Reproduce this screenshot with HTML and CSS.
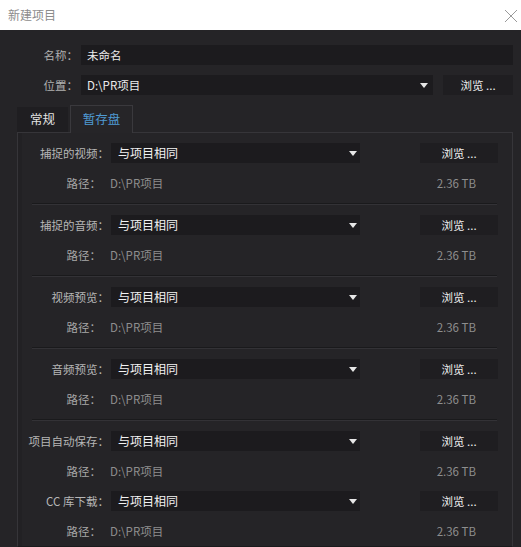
FILE: index.html
```html
<!DOCTYPE html>
<html lang="zh">
<head>
<meta charset="utf-8">
<title>新建项目</title>
<link rel="stylesheet" href="styles.css">
</head>
<body>
<div class="window">
  <div class="titlebar">
    <span class="title">新建项目</span>
    <svg class="close" width="14" height="14" viewBox="0 0 14 14"><path d="M1 1L13 13M13 1L1 13" stroke="#9a9a9a" stroke-width="1" fill="none"/></svg>
  </div>
  <div class="form">
    <div class="frow">
      <span class="flabel">名称：</span>
      <div class="field name">未命名</div>
    </div>
    <div class="frow">
      <span class="flabel">位置：</span>
      <div class="field select loc"><span>D:\PR项目</span><i class="arrow"></i></div>
      <div class="btn top">浏览 ...</div>
    </div>
  </div>
  <div class="tabs">
    <div class="tab">常规</div>
    <div class="tab active">暂存盘</div>
  </div>
  <div class="panel">
    <div class="section">
      <div class="r1"><span class="slabel">捕捉的视频：</span><div class="field select dd"><span>与项目相同</span><i class="arrow"></i></div><div class="btn sbtn">浏览 ...</div></div>
      <div class="r2"><span class="plabel">路径：</span><span class="path">D:\PR项目</span><span class="size">2.36 TB</span></div>
    </div>
    <div class="sep"></div>
    <div class="section">
      <div class="r1"><span class="slabel">捕捉的音频：</span><div class="field select dd"><span>与项目相同</span><i class="arrow"></i></div><div class="btn sbtn">浏览 ...</div></div>
      <div class="r2"><span class="plabel">路径：</span><span class="path">D:\PR项目</span><span class="size">2.36 TB</span></div>
    </div>
    <div class="sep"></div>
    <div class="section">
      <div class="r1"><span class="slabel">视频预览：</span><div class="field select dd"><span>与项目相同</span><i class="arrow"></i></div><div class="btn sbtn">浏览 ...</div></div>
      <div class="r2"><span class="plabel">路径：</span><span class="path">D:\PR项目</span><span class="size">2.36 TB</span></div>
    </div>
    <div class="sep"></div>
    <div class="section">
      <div class="r1"><span class="slabel">音频预览：</span><div class="field select dd"><span>与项目相同</span><i class="arrow"></i></div><div class="btn sbtn">浏览 ...</div></div>
      <div class="r2"><span class="plabel">路径：</span><span class="path">D:\PR项目</span><span class="size">2.36 TB</span></div>
    </div>
    <div class="sep"></div>
    <div class="section">
      <div class="r1"><span class="slabel">项目自动保存：</span><div class="field select dd"><span>与项目相同</span><i class="arrow"></i></div><div class="btn sbtn">浏览 ...</div></div>
      <div class="r2"><span class="plabel">路径：</span><span class="path">D:\PR项目</span><span class="size">2.36 TB</span></div>
      <div class="r1"><span class="slabel">CC 库下载：</span><div class="field select dd"><span>与项目相同</span><i class="arrow"></i></div><div class="btn sbtn">浏览 ...</div></div>
      <div class="r2"><span class="plabel">路径：</span><span class="path">D:\PR项目</span><span class="size">2.36 TB</span></div>
    </div>
  </div>
</div>
</body>
</html>
```
FILE: styles.css
```css
* { box-sizing: border-box; }
html, body { margin: 0; padding: 0; }
body {
  background: #252427;
  font-family: "Noto Sans CJK SC", "Microsoft YaHei", sans-serif;
  font-size: 11.5px;
  color: #b4b4b4;
  width: 521px;
  height: 547px;
  overflow: hidden;
}
.titlebar {
  height: 30px;
  background: #ffffff;
  display: flex;
  align-items: center;
  justify-content: space-between;
  padding: 0 3px 0 8px;
}
.title { color: #8c8c8c; font-size: 12px; line-height: 14px; }
.close { display: block; margin-top: 1px; }

.form {
  padding: 15px 8px 0 0;
  display: flex;
  flex-direction: column;
  gap: 10px;
}
.frow { display: flex; align-items: center; height: 20px; }
.flabel { width: 78px; text-align: right; color: #b0b0b0; line-height: 20px; }
.field {
  background: #1c1b1e;
  height: 20px;
  line-height: 20px;
  color: #ececec;
  padding-left: 6px;
}
.name { flex: 1; margin-left: 3px; }
.select { display: flex; align-items: center; justify-content: space-between; }
.loc { width: 352px; margin-left: 3px; padding-right: 5px; }
.arrow {
  display: block;
  width: 0; height: 0;
  border-left: 4px solid transparent;
  border-right: 4px solid transparent;
  border-top: 5px solid #e6e6e6;
}
.btn {
  background: #1f1e21;
  height: 20px;
  line-height: 20px;
  text-align: center;
  color: #f0f0f0;
}
.btn.top { width: 70px; margin-left: 10px; }

.tabs {
  display: flex;
  align-items: flex-end;
  margin: 10px 0 0 17px;
  height: 27px;
  position: relative;
  z-index: 1;
}
.tab {
  height: 25px;
  line-height: 24px;
  color: #e2e2e2;
  background: #1f1e21;
  width: 51px;
  text-align: center;
  font-size: 12.5px;
}
.tab.active {
  height: 28px;
  margin-left: 2px;
  width: 63px;
  background: #262528;
  color: #4f9ad3;
  border: 1px solid #3a393d;
  border-bottom: none;
  line-height: 26px;
  margin-bottom: -1px;
}
.panel {
  margin-left: 17px;
  width: 496px;
  height: 415px;
  border: 1px solid #363539;
  border-bottom-color: #1a1a1c;
  padding: 10px 0 0 0;
  box-shadow: inset 4px 0 0 #222124;
}
.r1, .r2 { display: flex; align-items: center; height: 20px; line-height: 20px; }
.section { display: flex; flex-direction: column; gap: 10px; }
.slabel { width: 91px; text-align: right; color: #b6b6b6; white-space: nowrap; }
.dd { width: 249px; margin-left: 2px; padding-left: 7px; padding-right: 3px; color: #f2f2f2; font-size: 12px; }
.sbtn { width: 78px; margin-left: 60px; }
.plabel { width: 83px; text-align: right; color: #a8a8a8; }
.path { margin-left: 9px; flex: 1; color: #8e8e8e; }
.size { color: #8e8e8e; margin-right: 36px; }
.sep {
  margin: 10px 15px 10px 14px;
  height: 2px;
  border-top: 1px solid #1a1a1c;
  border-bottom: 1px solid #333236;
}
```
